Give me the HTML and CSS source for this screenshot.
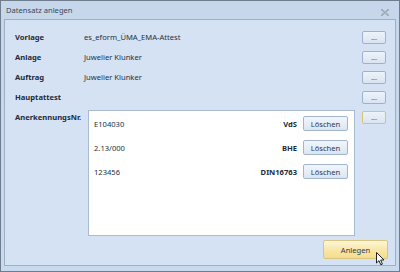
FILE: index.html
```html
<!DOCTYPE html>
<html>
<head>
<meta charset="utf-8">
<link rel="stylesheet" href="styles.css">
</head>
<body>
<div class="window">
  <div class="titlebar">
    <span class="title">Datensatz anlegen</span>
    <svg class="close" width="8" height="7" viewBox="0 0 8 7"><path d="M0.5 0.5 L7.5 6.5 M7.5 0.5 L0.5 6.5" stroke="#a3acb8" stroke-width="1.6" fill="none"/><path d="M0 0.5 H2 M6 0.5 H8 M0 6.5 H2 M6 6.5 H8" stroke="#a3acb8" stroke-width="1"/></svg>
  </div>
  <div class="panel">
    <div class="row">
      <span class="label">Vorlage</span>
      <span class="value">es_eform_ÜMA_EMA-Attest</span>
      <button class="dots">...</button>
    </div>
    <div class="row">
      <span class="label">Anlage</span>
      <span class="value">Juwelier Klunker</span>
      <button class="dots">...</button>
    </div>
    <div class="row">
      <span class="label">Auftrag</span>
      <span class="value">Juwelier Klunker</span>
      <button class="dots">...</button>
    </div>
    <div class="row">
      <span class="label">Hauptattest</span>
      <span class="value"></span>
      <button class="dots">...</button>
    </div>
    <div class="row top">
      <span class="label">AnerkennungsNr.</span>
      <div class="list">
        <div class="item"><span class="nr">E104030</span><span class="org">VdS</span><button class="del">Löschen</button></div>
        <div class="item"><span class="nr">2.13/000</span><span class="org">BHE</span><button class="del">Löschen</button></div>
        <div class="item"><span class="nr">123456</span><span class="org">DIN16763</span><button class="del">Löschen</button></div>
      </div>
      <button class="dots focus">...</button>
    </div>
    <div class="footer">
      <button class="ok">Anlegen</button>
      <svg class="cursor" width="10" height="14" viewBox="0 0 10 14"><path d="M0.5 0.5 L0.5 11 L3 8.6 L4.8 12.8 L6.4 12.1 L4.7 8 L8 8 Z" fill="#fff" stroke="#222" stroke-width="1" stroke-linejoin="round"/></svg>
    </div>
  </div>
</div>
</body>
</html>
```
FILE: styles.css
```css
* { box-sizing: border-box; }
html, body { margin: 0; padding: 0; }
body {
  width: 400px;
  height: 272px;
  overflow: hidden;
  font-family: "Noto Sans", "Open Sans", sans-serif;
  font-size: 7.6px;
  color: #1d2a3a;
}
.window {
  width: 400px;
  height: 272px;
  border: 1px solid #6f7c8c;
  background: linear-gradient(#c6d7ec, #c9d9ee);
  display: flex;
  flex-direction: column;
}
.titlebar {
  height: 18px;
  display: flex;
  align-items: center;
  justify-content: space-between;
  padding: 0 10px 0 5px;
}
.title {
  color: #3b4656;
  font-size: 7.6px;
}
.close { display: block; margin-top: 4px; }
.panel {
  margin: 0 3px 0 3px;
  height: 247px;
  border: 1px solid #9cb0c8;
  background: #d5e2f3;
  padding: 11px 9px 0 10px;
  display: flex;
  flex-direction: column;
  gap: 7px;
}
.row {
  display: flex;
  align-items: center;
  height: 13px;
}
.row.top {
  align-items: flex-start;
  height: auto;
}
.label {
  width: 69px;
  flex: none;
  font-weight: bold;
  line-height: 13px;
  color: #1e2a39;
}
.value {
  flex: 1;
  line-height: 13px;
  color: #24313f;
}
button {
  font-family: inherit;
  font-size: 7.6px;
  margin: 0;
  padding: 0;
  cursor: default;
}
.dots {
  width: 24px;
  height: 13px;
  border: 1px solid #9fb2cb;
  border-radius: 2px;
  background: linear-gradient(#eef3fa, #d9e4f2);
  color: #44546a;
  line-height: 8px;
  font-size: 7px;
  flex: none;
  margin-left: auto;
}
.dots.focus {
  border-color: #d8c27a;
}
.list {
  margin-left: 4px;
  margin-top: -1px;
  width: 267px;
  height: 126px;
  background: #fff;
  border: 1px solid #a9bbd1;
  padding: 5px 6px 0 5px;
  display: flex;
  flex-direction: column;
  gap: 9px;
}
.item {
  display: flex;
  align-items: center;
  height: 15px;
}
.nr { flex: 1; color: #24313f; }
.org { font-weight: bold; margin-right: 6px; color: #1e2a39; }
.del {
  width: 45px;
  height: 15px;
  border: 1px solid #a3b5cd;
  border-radius: 2px;
  background: linear-gradient(#f2f6fb, #dbe5f2);
  color: #2c3a4c;
}
.footer {
  display: flex;
  justify-content: flex-end;
  margin-top: -3px;
  position: relative;
}
.ok {
  width: 65px;
  height: 19px;
  margin-right: -2px;
  border: 1px solid #d9c57f;
  border-radius: 2px;
  background: linear-gradient(#fdf6d9, #f8e6a6 55%, #f6dc8c);
  color: #2c3a4c;
}
.cursor {
  position: absolute;
  left: 361px;
  top: 12px;
}
```
